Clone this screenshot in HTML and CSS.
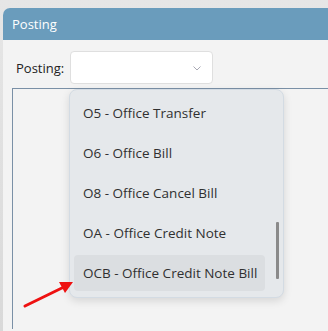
FILE: index.html
```html
<!DOCTYPE html>
<html lang="en">
<head>
    <meta charset="UTF-8">
    <title>Posting</title>
    <link rel="stylesheet" href="styles.css">
</head>
<body>
    <div class="window">
        <!-- 標題列 -->
        <div class="window-title">Posting</div>

        <div class="window-body">
            <div class="field-row">
                <label class="field-label">Posting:</label>
                <div class="select-box">
                    <svg class="chevron" width="8" height="5" viewBox="0 0 8 5">
                        <path d="M0.5 0.5 L4 4 L7.5 0.5" fill="none" stroke="#a9a9b4" stroke-width="1"/>
                    </svg>
                </div>
            </div>
            <div class="panel"></div>
        </div>

        <!-- 下拉選單 -->
        <div class="dropdown">
            <div class="option">O5 - Office Transfer</div>
            <div class="option">O6 - Office Bill</div>
            <div class="option">O8 - Office Cancel Bill</div>
            <div class="option">OA - Office Credit Note</div>
            <div class="option selected">OCB - Office Credit Note Bill</div>
            <div class="scroll-thumb"></div>
        </div>

        <!-- 紅色箭頭 -->
        <svg class="red-arrow" width="60" height="40" viewBox="0 0 60 40">
            <line x1="3" y1="30" x2="44" y2="10" stroke="#ee1111" stroke-width="3" stroke-linecap="round"/>
            <polygon points="51,6 37,6 43,17" fill="#ee1111"/>
        </svg>
    </div>
</body>
</html>
```

FILE: styles.css
```css
body {
    margin: 0;
    padding: 0;
    background: linear-gradient(#e6e6e6, #d9d9d9);
    font-family: "Open Sans", "Noto Sans", sans-serif;
    height: 331px;
    overflow: hidden;
}

/* 視窗 */
.window {
    position: relative;
    margin: 8px 0 0 3px;
    height: 323px;
    background-color: #f3f3f3;
    border-radius: 7px 0 0 0;
    overflow: hidden;
}

.window-title {
    height: 32px;
    background-color: #6a9cbc;
    color: #ffffff;
    font-size: 13px;
    line-height: 32px;
    padding-left: 9px;
}

.window-body {
    padding: 11px 0 0 9px;
}

.field-row {
    display: flex;
    align-items: center;
    gap: 6px;
    padding-left: 4px;
}

.field-label {
    font-size: 13px;
    color: #222222;
}

.select-box {
    width: 143px;
    height: 33px;
    box-sizing: border-box;
    background-color: #ffffff;
    border: 1px solid #dfdfdf;
    border-radius: 4px;
    display: flex;
    align-items: center;
    justify-content: flex-end;
    padding-right: 11px;
}

.chevron {
    margin-top: 2px;
}

.panel {
    margin-top: 4px;
    height: 240px;
    border-top: 1px solid #7a90a6;
    border-left: 1px solid #7a90a6;
}

/* 下拉選單 */
.dropdown {
    position: absolute;
    left: 66px;
    top: 81px;
    width: 215px;
    height: 209px;
    box-sizing: border-box;
    background-color: #e5e8eb;
    border: 1px solid #d3dbe3;
    border-radius: 8px;
    box-shadow: 0 3px 8px rgba(0, 0, 0, 0.12);
    padding: 3px 18px 0 4px;
    display: flex;
    flex-direction: column;
}

.option {
    height: 40px;
    line-height: 40px;
    padding-left: 9px;
    font-size: 13.5px;
    color: #303030;
    border-radius: 4px;
}

.option.selected {
    background-color: #dbdee1;
    height: 36px;
    line-height: 36px;
    margin-top: 2px;
}

.scroll-thumb {
    position: absolute;
    left: 206px;
    top: 132px;
    width: 3px;
    height: 57px;
    background-color: #8a8a8a;
    border-radius: 1px;
}

.red-arrow {
    position: absolute;
    left: 19px;
    top: 268px;
}
```
